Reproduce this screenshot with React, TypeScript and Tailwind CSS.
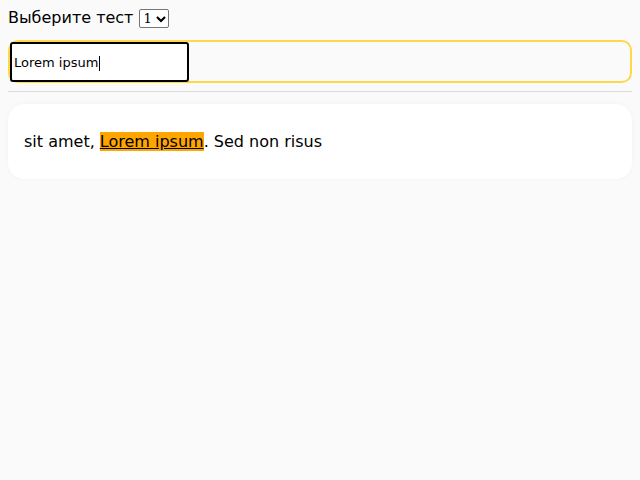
export default function App() {
  return (
    <div className="min-h-[480px] bg-[#fafafa] p-2 text-black" style={{ fontFamily: '"DejaVu Sans", sans-serif' }}>
      <div className="flex h-[20px] items-center gap-[6px] text-[16px]">
        <span>Выберите тест</span>
        <div className="mt-[1px] flex h-[19px] w-[30px] items-center justify-between rounded-[2px] border border-[#767676] bg-white pl-[3px] pr-[2px] text-[13px]" style={{ fontFamily: '"DejaVu Serif", serif' }}>
          <span>1</span>
          <svg width="10" height="8" viewBox="0 0 10 8"><path d="M1 2 L5 6 L9 2" stroke="black" strokeWidth="2.2" fill="none" /></svg>
        </div>
      </div>
      <div className="mt-[12px] h-[43px] rounded-[10px] border-2 border-[#fdd94a] bg-[#fafafa]">
        <div className="flex h-[40px] w-[179px] items-center rounded-[3px] border-2 border-black bg-white pl-[2px] pt-[2px] text-[13px]">
          <span>Lorem ipsum</span>
          <span className="ml-[1px] inline-block h-[15px] w-px bg-black" />
        </div>
      </div>
      <div className="mt-[8px] h-px bg-[#dcdcdc]" />
      <div className="mt-[12px] flex h-[75px] items-center rounded-[16px] bg-white px-4 text-[16px] shadow-[0_0_4px_rgba(0,0,0,0.04)]">
        <span>
          sit amet, <mark className="bg-[#ffa500] text-black underline">Lorem ipsum</mark>. Sed non risus
        </span>
      </div>
    </div>
  );
}
